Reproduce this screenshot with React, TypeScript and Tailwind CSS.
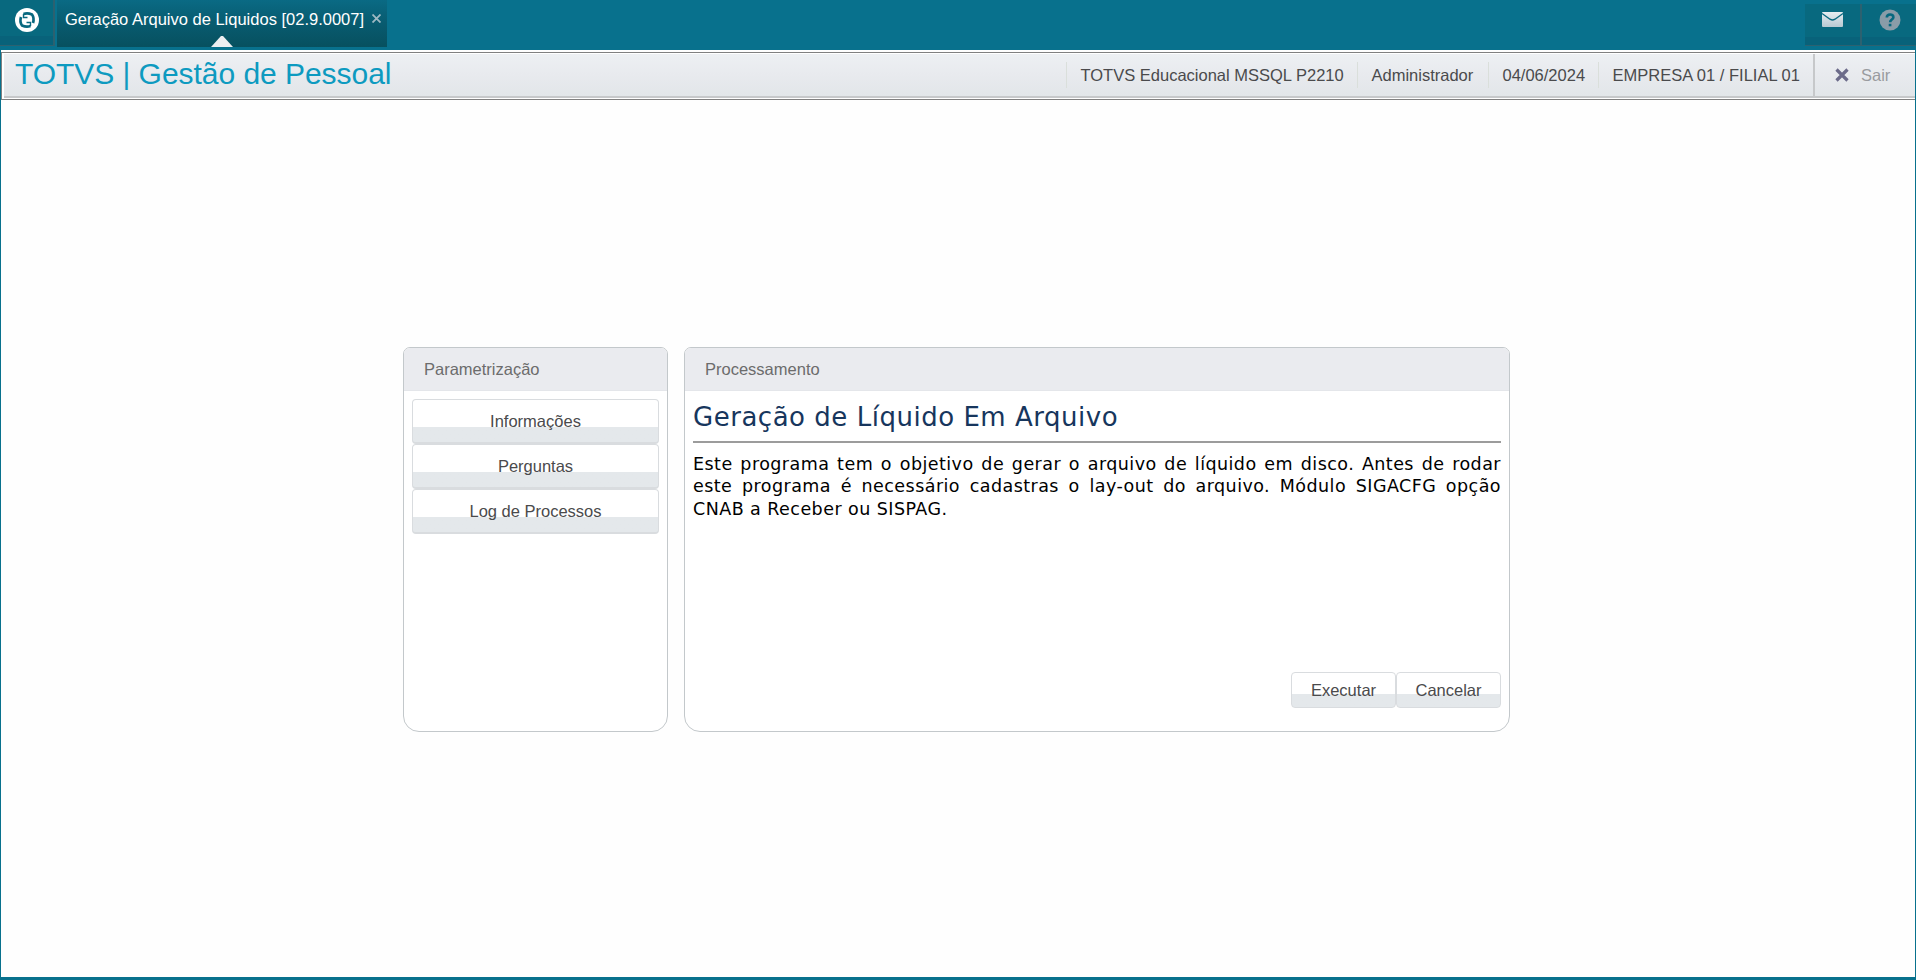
import type { ReactNode } from "react";

const session = [
  { text: "TOTVS Educacional MSSQL P2210", width: "w-[291px]" },
  { text: "Administrador", width: "w-[131px]" },
  { text: "04/06/2024", width: "w-[110px]" },
  { text: "EMPRESA 01 / FILIAL 01", width: "w-[215px]" },
];

const menu = ["Informações", "Perguntas", "Log de Processos"];

function Logo() {
  return (
    <svg viewBox="0 0 24 24" className="size-6" fill="none">
      <circle cx="12" cy="12" r="12" fill="#fff" />
      <g stroke="#08687f" strokeWidth="2.700" strokeLinejoin="round">
        <path d="M8.500 6q4-1.500 8.500.500 2.500 3.500 1 8.500" />
        <path d="M15.500 18q-4 1.500-8.500-.500-2.500-3.500-1-8.500" />
      </g>
      <path d="M8.500 6v3.500h4M15.500 18v-3.500h-4" stroke="#08687f" strokeWidth="1.400" />
    </svg>
  );
}

function MailIcon() {
  return (
    <svg viewBox="0 0 21 15" className="h-[15px] w-[21px]" fill="none">
      <rect width="21" height="15" rx="1" fill="url(#mail)" />
      <path d="M0 1.500l8 5.700q2.500 1.600 5 0l8-5.700" stroke="#08687f" strokeWidth="1.400" />
      <defs>
        <linearGradient id="mail" x1="0" y1="0" x2="0" y2="1">
          <stop stopColor="#e6edf1" />
          <stop offset="1" stopColor="#b8c9d2" />
        </linearGradient>
      </defs>
    </svg>
  );
}

function HelpIcon() {
  return (
    <svg viewBox="0 0 22 22" className="size-[22px]" fill="none">
      <circle cx="11" cy="11" r="10.500" fill="#8a9ca8" />
      <path d="M7.800 8.500c0-4 6.600-4 6.600-.3 0 2.300-3.300 2.300-3.300 5" stroke="#08687f" strokeWidth="2.600" />
      <path d="M9.700 14.800h2.700v2.500H9.700z" fill="#08687f" />
    </svg>
  );
}

function Panel({ title, className, children }: { title: string; className: string; children: ReactNode }) {
  return (
    <section className={`flex flex-col overflow-hidden rounded-t-[7px] rounded-b-[16px] border border-[#c3c8cb] bg-white ${className}`}>
      <h2 className="h-[43px] shrink-0 border-b border-[#e4e6ea] bg-[#eaebef] pl-[20px] leading-[42px] text-[#6c6c6c]">
        {title}
      </h2>
      {children}
    </section>
  );
}

export default function App() {
  return (
    <div className="flex h-[980px] w-[1916px] flex-col overflow-hidden bg-[#08718d] font-['Liberation_Sans',Arial,sans-serif] text-[16.5px]">
      {/* Barra superior */}
      <div className="flex h-[50px] shrink-0">
        <div className="flex h-[46px] w-[55px] flex-col items-center border-r-2 border-b border-[#2c6170] bg-linear-to-b from-[#08697f] from-80% to-[#08627a] to-80% pt-2">
          <Logo />
        </div>
        <div className="relative ml-[2px] flex h-[47px] w-[330px] bg-linear-to-b from-[#0a6a84] via-[#085b6f] via-50% to-[#07505f] pl-[8px]">
          <span className="w-[307px] whitespace-nowrap leading-[39px] text-white">
            Geração Arquivo de Liquidos [02.9.0007]
          </span>
          <svg viewBox="0 0 9 9" className="mt-[14px] h-[9px] w-[9px]" stroke="#9fb9c3" strokeWidth="1.800">
            <path d="M.500.500l8 8M8.500.500l-8 8" />
          </svg>
          <svg viewBox="0 0 22 11" className="absolute bottom-0 left-[154px] h-[11px] w-[22px]">
            <path d="M0 11L10 0h2l10 11z" fill="#eceef1" />
          </svg>
        </div>
        <div className="mt-1 ml-auto flex h-[42px] w-[57px] justify-center border-r-2 border-b border-[#2c6170] bg-linear-to-b from-[#08697f] from-80% to-[#08627a] to-80% pt-2">
          <MailIcon />
        </div>
        <div className="mt-1 flex h-[42px] w-[54px] justify-center border-b border-[#2c6170] bg-linear-to-b from-[#08697f] from-80% to-[#08627a] to-80% pt-[5px] pl-px">
          <HelpIcon />
        </div>
      </div>

      <div className="mx-px mb-[3px] flex grow flex-col bg-[#fefefe]">
        {/* Cabeçalho do módulo */}
        <header className="mt-[2px] flex h-[48px] shrink-0 border border-r-0 border-[#808080] bg-white pt-px pb-px pl-[2px]">
          <div className="flex grow border-b-2 border-[#c6c8ca] bg-linear-to-b from-[#edf0f3] via-[#e8eaee] via-50% to-[#e2e6e9] pl-[11px]">
            <h1 className="grow whitespace-nowrap text-[30px] leading-[39px] tracking-[-0.04px] text-[#0d9ac0]">
              TOTVS | Gestão de Pessoal
            </h1>
            <div className="flex items-center text-[#4a4a4c]">
              {session.map((item) => (
                <span
                  key={item.text}
                  className={`h-[26px] whitespace-nowrap border-l border-[#dadfdb] pl-[13.5px] leading-[27px] ${item.width}`}
                >
                  {item.text}
                </span>
              ))}
            </div>
            <button className="flex w-[102px] items-center border-l-2 border-[#c6c8ca] pl-[20px] text-[#999b9f]">
              <svg viewBox="0 0 14 14" className="mr-[12px] size-[14px]" stroke="#6c6b8a" strokeWidth="3.200">
                <path d="M1.500 1.500l11 11M12.500 1.500l-11 11" />
              </svg>
              Sair
            </button>
          </div>
        </header>

        {/* Painéis */}
        <main className="mt-[247px] ml-[402px] flex h-[385px] gap-4">
          <Panel title="Parametrização" className="w-[265px]">
            <div className="flex flex-col px-2 pt-[8px]">
              {menu.map((label) => (
                <button
                  key={label}
                  className="h-[45px] rounded-[4px] border border-b-2 border-[#d9dcdf] bg-linear-to-b from-white from-[27px] to-[#e4e8eb] to-[27px] pt-px text-[#4a4a4c]"
                >
                  {label}
                </button>
              ))}
            </div>
          </Panel>

          <Panel title="Processamento" className="w-[826px]">
            <div className="flex grow flex-col px-2 font-['DejaVu_Sans',Verdana,sans-serif]">
              <h3 className="h-[50px] whitespace-nowrap text-[26px] leading-[52px] tracking-[0.52px] text-[#17365d]">
                Geração de Líquido Em Arquivo
              </h3>
              <hr className="border-t-2 border-[#9c9c9c]" />
              <p className="mt-[9.5px] text-justify text-[17.5px] leading-[22.5px] tracking-[0.45px] text-black">
                Este programa tem o objetivo de gerar o arquivo de líquido em disco. Antes de rodar este programa é
                necessário cadastras o lay-out do arquivo. Módulo SIGACFG opção CNAB a Receber ou SISPAG.
              </p>
            </div>
            <div className="mb-[23px] flex justify-end pr-2">
              {["Executar", "Cancelar"].map((label) => (
                <button
                  key={label}
                  className="h-9 w-[105px] rounded-[4px] border border-[#d9dcdf] bg-linear-to-b from-white from-[21px] to-[#e4e8eb] to-[21px] pt-px text-[#4a4a4c]"
                >
                  {label}
                </button>
              ))}
            </div>
          </Panel>
        </main>
      </div>
    </div>
  );
}
